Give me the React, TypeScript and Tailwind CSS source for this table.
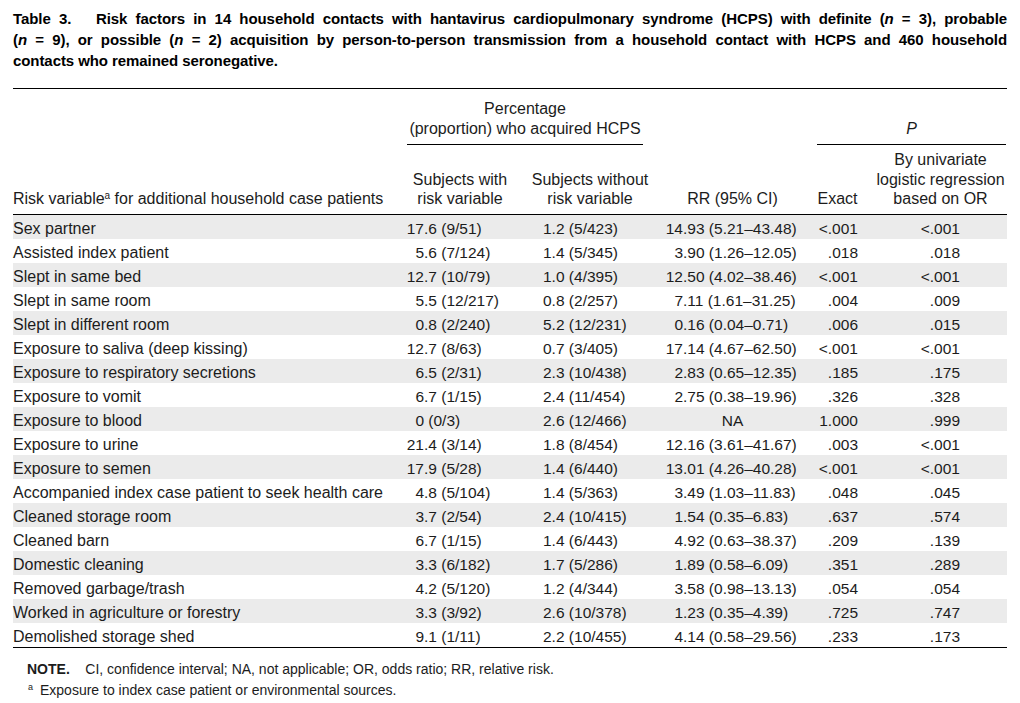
import React from "react";

type Row = {
  name: string;
  withInt: string;
  withRest: string;
  without: string;
  rrInt: string;
  rrRest: string;
  exact: string;
  logistic: string;
};

const rows: Row[] = [
  { name: "Sex partner", withInt: "17", withRest: ".6 (9/51)", without: "1.2 (5/423)", rrInt: "14", rrRest: ".93 (5.21–43.48)", exact: "<.001", logistic: "<.001" },
  { name: "Assisted index patient", withInt: "5", withRest: ".6 (7/124)", without: "1.4 (5/345)", rrInt: "3", rrRest: ".90 (1.26–12.05)", exact: ".018", logistic: ".018" },
  { name: "Slept in same bed", withInt: "12", withRest: ".7 (10/79)", without: "1.0 (4/395)", rrInt: "12", rrRest: ".50 (4.02–38.46)", exact: "<.001", logistic: "<.001" },
  { name: "Slept in same room", withInt: "5", withRest: ".5 (12/217)", without: "0.8 (2/257)", rrInt: "7", rrRest: ".11 (1.61–31.25)", exact: ".004", logistic: ".009" },
  { name: "Slept in different room", withInt: "0", withRest: ".8 (2/240)", without: "5.2 (12/231)", rrInt: "0", rrRest: ".16 (0.04–0.71)", exact: ".006", logistic: ".015" },
  { name: "Exposure to saliva (deep kissing)", withInt: "12", withRest: ".7 (8/63)", without: "0.7 (3/405)", rrInt: "17", rrRest: ".14 (4.67–62.50)", exact: "<.001", logistic: "<.001" },
  { name: "Exposure to respiratory secretions", withInt: "6", withRest: ".5 (2/31)", without: "2.3 (10/438)", rrInt: "2", rrRest: ".83 (0.65–12.35)", exact: ".185", logistic: ".175" },
  { name: "Exposure to vomit", withInt: "6", withRest: ".7 (1/15)", without: "2.4 (11/454)", rrInt: "2", rrRest: ".75 (0.38–19.96)", exact: ".326", logistic: ".328" },
  { name: "Exposure to blood", withInt: "0", withRest: " (0/3)", without: "2.6 (12/466)", rrInt: "", rrRest: "NA", exact: "1.000", logistic: ".999" },
  { name: "Exposure to urine", withInt: "21", withRest: ".4 (3/14)", without: "1.8 (8/454)", rrInt: "12", rrRest: ".16 (3.61–41.67)", exact: ".003", logistic: "<.001" },
  { name: "Exposure to semen", withInt: "17", withRest: ".9 (5/28)", without: "1.4 (6/440)", rrInt: "13", rrRest: ".01 (4.26–40.28)", exact: "<.001", logistic: "<.001" },
  { name: "Accompanied index case patient to seek health care", withInt: "4", withRest: ".8 (5/104)", without: "1.4 (5/363)", rrInt: "3", rrRest: ".49 (1.03–11.83)", exact: ".048", logistic: ".045" },
  { name: "Cleaned storage room", withInt: "3", withRest: ".7 (2/54)", without: "2.4 (10/415)", rrInt: "1", rrRest: ".54 (0.35–6.83)", exact: ".637", logistic: ".574" },
  { name: "Cleaned barn", withInt: "6", withRest: ".7 (1/15)", without: "1.4 (6/443)", rrInt: "4", rrRest: ".92 (0.63–38.37)", exact: ".209", logistic: ".139" },
  { name: "Domestic cleaning", withInt: "3", withRest: ".3 (6/182)", without: "1.7 (5/286)", rrInt: "1", rrRest: ".89 (0.58–6.09)", exact: ".351", logistic: ".289" },
  { name: "Removed garbage/trash", withInt: "4", withRest: ".2 (5/120)", without: "1.2 (4/344)", rrInt: "3", rrRest: ".58 (0.98–13.13)", exact: ".054", logistic: ".054" },
  { name: "Worked in agriculture or forestry", withInt: "3", withRest: ".3 (3/92)", without: "2.6 (10/378)", rrInt: "1", rrRest: ".23 (0.35–4.39)", exact: ".725", logistic: ".747" },
  { name: "Demolished storage shed", withInt: "9", withRest: ".1 (1/11)", without: "2.2 (10/455)", rrInt: "4", rrRest: ".14 (0.58–29.56)", exact: ".233", logistic: ".173" },
];

// shared column template for header and body
const cols = "grid grid-cols-[382px_130px_130px_155px_55px_141px]";

const App: React.FC = () => {
  return (
    <div className="w-[1020px] h-[703px] bg-white px-[13px] pt-[8px] text-[#1c1c1c] font-['Liberation_Sans',Arial,sans-serif] overflow-hidden">
      {/* Title */}
      <div className="font-bold text-[15px] leading-[21px] text-black tracking-[-0.005em] whitespace-nowrap">
        <div className="text-justify [text-align-last:justify]">
          Table 3.&nbsp;&nbsp; Risk factors in 14 household contacts with hantavirus cardiopulmonary syndrome (HCPS) with definite (<i>n</i> = 3), probable
        </div>
        <div className="text-justify [text-align-last:justify]">
          (<i>n</i> = 9), or possible (<i>n</i> = 2) acquisition by person-to-person transmission from a household contact with HCPS and 460 household
        </div>
        <div>contacts who remained seronegative.</div>
      </div>

      {/* Table */}
      <div className="mt-[17px] border-t border-black text-[16px]">
        {/* header group row */}
        <div className={`${cols} pt-[10px] leading-[20px]`}>
          <div />
          <div className="col-span-2 mx-[12px] pb-[5px] border-b border-black text-center">
            <div>Percentage</div>
            <div>(proportion) who acquired HCPS</div>
          </div>
          <div />
          <div className="col-span-2 ml-[7px] pb-[5px] border-b border-black flex items-end justify-center">
            <i>P</i>
          </div>
        </div>

        {/* column heads */}
        <div className={`${cols} items-end pt-[5px] pb-[5px] leading-[19.5px] border-b border-black`}>
          <div>
            Risk variable<sup className="text-[10px]">a</sup> for additional household case patients
          </div>
          <div className="text-center">
            <div>Subjects with</div>
            <div>risk variable</div>
          </div>
          <div className="text-center">
            <div>Subjects without</div>
            <div>risk variable</div>
          </div>
          <div className="text-center">RR (95% CI)</div>
          <div className="text-center">Exact</div>
          <div className="text-center pl-[10px]">
            <div>By univariate</div>
            <div>logistic regression</div>
            <div>based on OR</div>
          </div>
        </div>

        {/* body */}
        <div className="border-b border-black">
          {rows.map((r, i) => (
            <div
              key={r.name}
              className={`${cols} h-[24px] items-center pt-[2px] whitespace-nowrap text-[15.5px] ${i % 2 === 0 ? "bg-[#ebebeb]" : "bg-white"}`}
            >
              <div className="text-[16px]">{r.name}</div>
              <div className="flex">
                <span className="w-[29px] shrink-0 text-right">{r.withInt}</span>
                <span className="whitespace-pre">{r.withRest}</span>
              </div>
              <div className="pl-[18px]">{r.without}</div>
              {r.rrInt ? (
                <div className="flex">
                  <span className="w-[28px] shrink-0 text-right">{r.rrInt}</span>
                  <span>{r.rrRest}</span>
                </div>
              ) : (
                <div className="text-center">{r.rrRest}</div>
              )}
              <div className="text-right pr-[7px]">{r.exact}</div>
              <div className="text-right pr-[46px]">{r.logistic}</div>
            </div>
          ))}
        </div>
      </div>

      {/* Notes */}
      <div className="pl-[14px] pt-[11px] text-[14px] leading-[21px]">
        <div>
          <span className="font-bold">NOTE.</span>&nbsp;&nbsp;&nbsp; CI, confidence interval; NA, not applicable; OR, odds ratio; RR, relative risk.
        </div>
        <div>
          <span className="inline-block w-[13px] pl-[1px] text-[9px] align-[5px] leading-none">a</span>
          Exposure to index case patient or environmental sources.
        </div>
      </div>
    </div>
  );
};

export default App;
